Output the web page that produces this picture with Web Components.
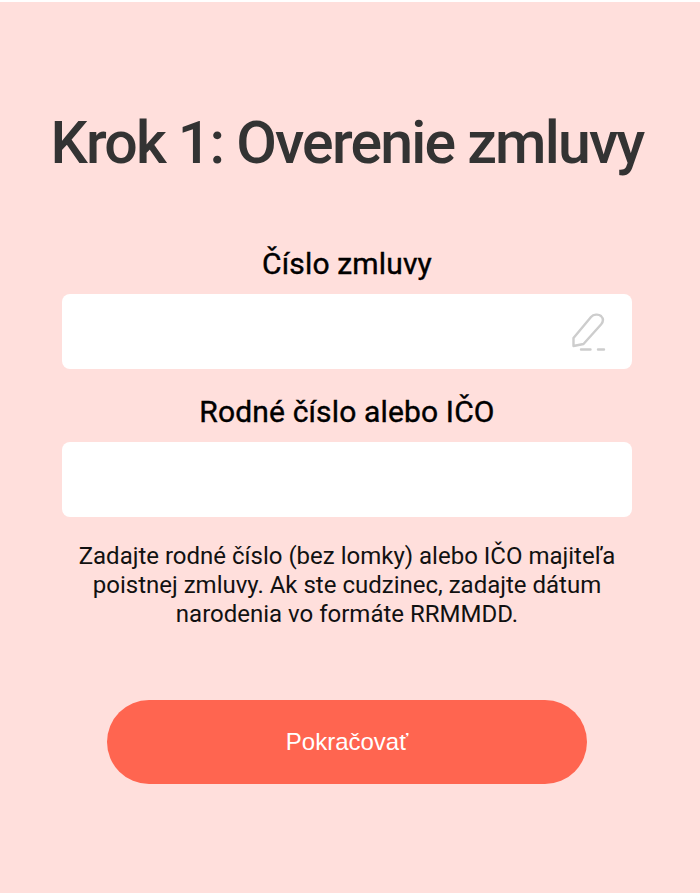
<!DOCTYPE html>
<html lang="sk">
<head>
<meta charset="utf-8">
<title>Krok 1: Overenie zmluvy</title>
<style>
  html, body { margin: 0; padding: 0; background: #fff; }
</style>
</head>
<body>
<contract-step heading="Krok 1: Overenie zmluvy">
  <form-field label="Číslo zmluvy" icon></form-field>
  <form-field label="Rodné číslo alebo IČO"></form-field>
  <p slot="hint">Zadajte rodné číslo (bez lomky) alebo IČO majiteľa<br>poistnej zmluvy. Ak ste cudzinec, zadajte dátum<br>narodenia vo formáte RRMMDD.</p>
  <pill-button slot="action">Pokračovať</pill-button>
</contract-step>

<script>
class ContractStep extends HTMLElement {
    constructor() {
        super();
        this.attachShadow({ mode: 'open' });
    }

    connectedCallback() {
        this.shadowRoot.innerHTML = `
        <style>
            :host { display: block; margin-top: 2px; height: 891px; box-sizing: border-box; padding: 106px 68px 0 62px; background: #ffdfdc; font-family: Roboto, sans-serif; }
            h1 { margin: 0 -20px 68px; text-align: center; font-size: 59px; line-height: 70px; font-weight: 500; letter-spacing: -1.8px; color: #333; white-space: nowrap; }
            .fields { display: flex; flex-direction: column; gap: 25px; }
            ::slotted(p) { margin: 25px 0 0; text-align: center; font-size: 24px; line-height: 29px; color: #111; }
            .action { display: flex; justify-content: center; margin-top: 71px; }
        </style>
        <h1>${this.getAttribute('heading')}</h1>
        <div class="fields"><slot></slot></div>
        <slot name="hint"></slot>
        <div class="action"><slot name="action"></slot></div>
        `;
    }
}

class FormField extends HTMLElement {
    constructor() {
        super();
        this.attachShadow({ mode: 'open' });
    }

    connectedCallback() {
        const icon = this.hasAttribute('icon') ? `
            <svg width="36" height="40" viewBox="0 0 36 40" fill="none" stroke="#cdcdcd" stroke-width="2.4" stroke-linecap="round" stroke-linejoin="round">
                <path d="M3.5 33 L3.5 25 L21 4 C23.5 1.2 28.5 0.8 31 3 C33.5 5.5 33.3 8.8 31 11.5 L13.5 31 Z"/>
                <path d="M11 36.5 H20.5 M28 36.5 H34"/>
            </svg>` : '';
        this.shadowRoot.innerHTML = `
        <style>
            :host { display: block; }
            label { display: block; text-align: center; font-size: 30px; line-height: 35px; font-weight: 400; letter-spacing: 0.15px; -webkit-text-stroke: 0.4px #000; color: #000; margin-bottom: 13px; }
            .box { display: flex; align-items: center; justify-content: flex-end; box-sizing: border-box; height: 75px; padding: 0 26px 0 16px; background: #fff; border-radius: 8px; }
            svg { display: block; margin-top: 3px; filter: blur(0.4px); }
        </style>
        <label>${this.getAttribute('label')}</label>
        <div class="box">${icon}</div>
        `;
    }
}

class PillButton extends HTMLElement {
    constructor() {
        super();
        this.attachShadow({ mode: 'open' });
    }

    connectedCallback() {
        this.shadowRoot.innerHTML = `
        <style>
            :host { display: flex; align-items: center; justify-content: center; width: 480px; height: 84px; border-radius: 42px; background: #ff6550; color: #fff; font-family: "Liberation Sans", Arial, sans-serif; font-size: 24px; cursor: pointer; }
        </style>
        <slot></slot>
        `;
    }
}

customElements.define('contract-step', ContractStep);
customElements.define('form-field', FormField);
customElements.define('pill-button', PillButton);
</script>
</body>
</html>
